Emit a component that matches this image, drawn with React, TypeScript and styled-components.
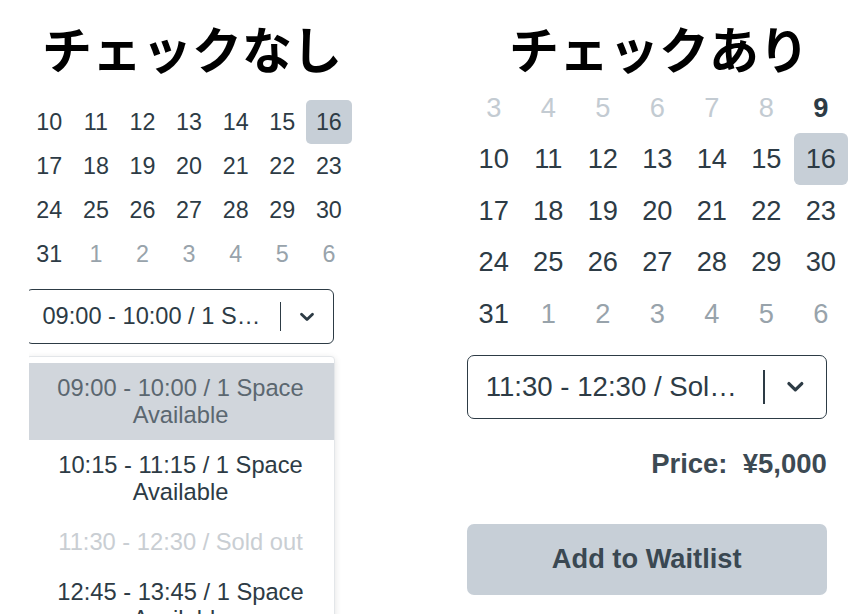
import React from "react";
import styled, { createGlobalStyle } from "styled-components";

const GlobalStyle = createGlobalStyle`
  html, body { margin: 0; padding: 0; background: #ffffff; }
  body { font-family: "Liberation Sans", Arial, sans-serif; }
`;

const ink = "#2d3b45";

const Page = styled.main`
  width: 848px;
  height: 614px;
  overflow: hidden;
  display: flex;
  background: #ffffff;
`;

const Pane = styled.section`
  width: 424px;
  flex: none;
  display: flex;
  flex-direction: column;
  min-height: 0;
`;

const Title = styled.h1<{ $indent: number }>`
  margin: 22px 0 0;
  padding-left: ${(p) => p.$indent}px;
  font-family: "Noto Sans CJK JP", "Noto Sans", sans-serif;
  font-weight: 700;
  font-size: 50px;
  line-height: 50px;
  color: #000000;
  white-space: nowrap;
`;

const Viewport = styled.div<{ $left: number; $top: number }>`
  margin-left: ${(p) => p.$left}px;
  margin-top: ${(p) => p.$top}px;
  flex: 1;
  min-height: 0;
  overflow: hidden;
`;

const Widget = styled.div<{ $s: number; $shift: number }>`
  margin-left: ${(p) => p.$shift}px;
  width: ${(p) => 326.2 * p.$s}px;
  padding-bottom: 12px;
`;

const Grid = styled.div<{ $s: number }>`
  display: grid;
  grid-template-columns: repeat(7, ${(p) => 46.6 * p.$s}px);
  grid-auto-rows: ${(p) => 44 * p.$s}px;
`;

type Tone = "prev" | "cur" | "next" | "today";

const toneColor: Record<Tone, string> = {
  prev: "#c3cbd2",
  cur: ink,
  next: "#98a3ab",
  today: ink,
};

const Day = styled.div<{ $s: number; $tone: Tone; $selected?: boolean }>`
  display: flex;
  align-items: center;
  justify-content: center;
  font-size: ${(p) => 23.3 * p.$s}px;
  font-weight: ${(p) => (p.$tone === "today" ? 700 : 400)};
  color: ${(p) => toneColor[p.$tone]};
  background: ${(p) => (p.$selected ? "#c7cfd7" : "transparent")};
  border-radius: ${(p) => 5 * p.$s}px;
`;

const Select = styled.div<{ $s: number }>`
  box-sizing: border-box;
  display: flex;
  align-items: center;
  width: ${(p) => 308 * p.$s}px;
  height: ${(p) => 55 * p.$s}px;
  margin-top: ${(p) => 13 * p.$s}px;
  border: ${(p) => 1.5 * p.$s}px solid ${ink};
  border-radius: ${(p) => 6 * p.$s}px;
  background: #ffffff;
`;

const Value = styled.div<{ $s: number }>`
  flex: 1;
  min-width: 0;
  padding: 0 ${(p) => 12 * p.$s}px 0 ${(p) => 15.5 * p.$s}px;
  white-space: nowrap;
  overflow: hidden;
  text-overflow: ellipsis;
  font-size: ${(p) => 23.6 * p.$s}px;
  color: ${ink};
`;

const Separator = styled.span<{ $s: number }>`
  flex: none;
  width: ${(p) => 1.5 * p.$s}px;
  height: ${(p) => 29 * p.$s}px;
  background: ${ink};
`;

const Indicator = styled.span<{ $s: number }>`
  flex: none;
  width: ${(p) => 52 * p.$s}px;
  display: flex;
  align-items: center;
  justify-content: center;
`;

const Menu = styled.div<{ $s: number }>`
  box-sizing: border-box;
  width: ${(p) => 309 * p.$s}px;
  margin-top: ${(p) => 12 * p.$s}px;
  padding-top: ${(p) => 6 * p.$s}px;
  border: 1px solid #e3e6e9;
  border-radius: ${(p) => 4 * p.$s}px;
  background: #ffffff;
  box-shadow: 0 2px 7px rgba(0, 0, 0, 0.12);
`;

type OptState = "focused" | "normal" | "disabled";

const optColor: Record<OptState, string> = {
  focused: "#5b6770",
  normal: ink,
  disabled: "#c9ced3",
};

const Option = styled.div<{ $s: number; $state: OptState }>`
  padding: ${(p) => 11.5 * p.$s}px ${(p) => 8 * p.$s}px;
  text-align: center;
  font-size: ${(p) => 23.7 * p.$s}px;
  line-height: ${(p) => 27 * p.$s}px;
  color: ${(p) => optColor[p.$state]};
  background: ${(p) => (p.$state === "focused" ? "#d1d6dc" : "transparent")};
`;

const Price = styled.div<{ $s: number }>`
  width: ${(p) => 308 * p.$s}px;
  margin-top: 30px;
  text-align: right;
  font-size: ${(p) => 23.5 * p.$s}px;
  line-height: 30px;
  font-weight: 700;
  color: #3d4a53;
  white-space: pre;
`;

const ActionButton = styled.button<{ $s: number }>`
  display: block;
  width: ${(p) => 308 * p.$s}px;
  height: 71px;
  margin-top: 45px;
  padding: 0;
  border: none;
  border-radius: ${(p) => 6 * p.$s}px;
  background: #c7cfd7;
  font-family: "Liberation Sans", Arial, sans-serif;
  font-size: ${(p) => 23.3 * p.$s}px;
  font-weight: 700;
  color: #3a4852;
`;

const Chevron = ({ s }: { s: number }) => (
  <svg width={16 * s} height={10 * s} viewBox="0 0 16 10" fill="none">
    <path d="M2.5 2.2 L8 7.6 L13.5 2.2" stroke={ink} strokeWidth={2.8} strokeLinecap="round" strokeLinejoin="round" />
  </svg>
);

type DayData = { n: number; tone: Tone; selected?: boolean };

const range = (a: number, b: number, tone: Tone): DayData[] => {
  const out: DayData[] = [];
  for (let i = a; i <= b; i++) out.push({ n: i, tone });
  return out;
};

const mainWeeks: DayData[][] = [
  [...range(10, 15, "cur"), { n: 16, tone: "cur", selected: true }],
  range(17, 23, "cur"),
  range(24, 30, "cur"),
  [{ n: 31, tone: "cur" }, ...range(1, 6, "next")],
];

const firstWeek: DayData[] = [...range(3, 8, "prev"), { n: 9, tone: "today" }];

type Opt = { lines: string[]; state: OptState };

const options: Opt[] = [
  { lines: ["09:00 - 10:00 / 1 Space", "Available"], state: "focused" },
  { lines: ["10:15 - 11:15 / 1 Space", "Available"], state: "normal" },
  { lines: ["11:30 - 12:30 / Sold out"], state: "disabled" },
  { lines: ["12:45 - 13:45 / 1 Space", "Available"], state: "normal" },
];

type WidgetProps = {
  s: number;
  shift: number;
  weeks: DayData[][];
  value: string;
  menu?: boolean;
  waitlist?: boolean;
};

const Booking = ({ s, shift, weeks, value, menu, waitlist }: WidgetProps) => (
  <Widget $s={s} $shift={shift}>
    <Grid $s={s}>
      {weeks.flat().map((d, i) => (
        <Day key={i} $s={s} $tone={d.tone} $selected={d.selected}>
          {d.n}
        </Day>
      ))}
    </Grid>
    <Select $s={s}>
      <Value $s={s}>{value}</Value>
      <Separator $s={s} />
      <Indicator $s={s}>
        <Chevron s={s} />
      </Indicator>
    </Select>
    {menu && (
      <Menu $s={s}>
        {options.map((o, i) => (
          <Option key={i} $s={s} $state={o.state}>
            {o.lines.map((l, j) => (
              <div key={j}>{l}</div>
            ))}
          </Option>
        ))}
      </Menu>
    )}
    {waitlist && (
      <>
        <Price $s={s}>{"Price:  ¥5,000"}</Price>
        <ActionButton $s={s}>Add to Waitlist</ActionButton>
      </>
    )}
  </Widget>
);

export default function App() {
  return (
    <>
      <GlobalStyle />
      <Page>
        <Pane>
          <Title $indent={42}>チェックなし</Title>
          <Viewport $left={29} $top={28}>
            <Booking
              s={1}
              shift={-3}
              weeks={mainWeeks}
              value="09:00 - 10:00 / 1 Space Available"
              menu
            />
          </Viewport>
        </Pane>
        <Pane>
          <Title $indent={85}>チェックあり</Title>
          <Viewport $left={42.5} $top={10}>
            <Booking
              s={1.17}
              shift={0}
              weeks={[firstWeek, ...mainWeeks]}
              value="11:30 - 12:30 / Sold out"
              waitlist
            />
          </Viewport>
        </Pane>
      </Page>
    </>
  );
}
